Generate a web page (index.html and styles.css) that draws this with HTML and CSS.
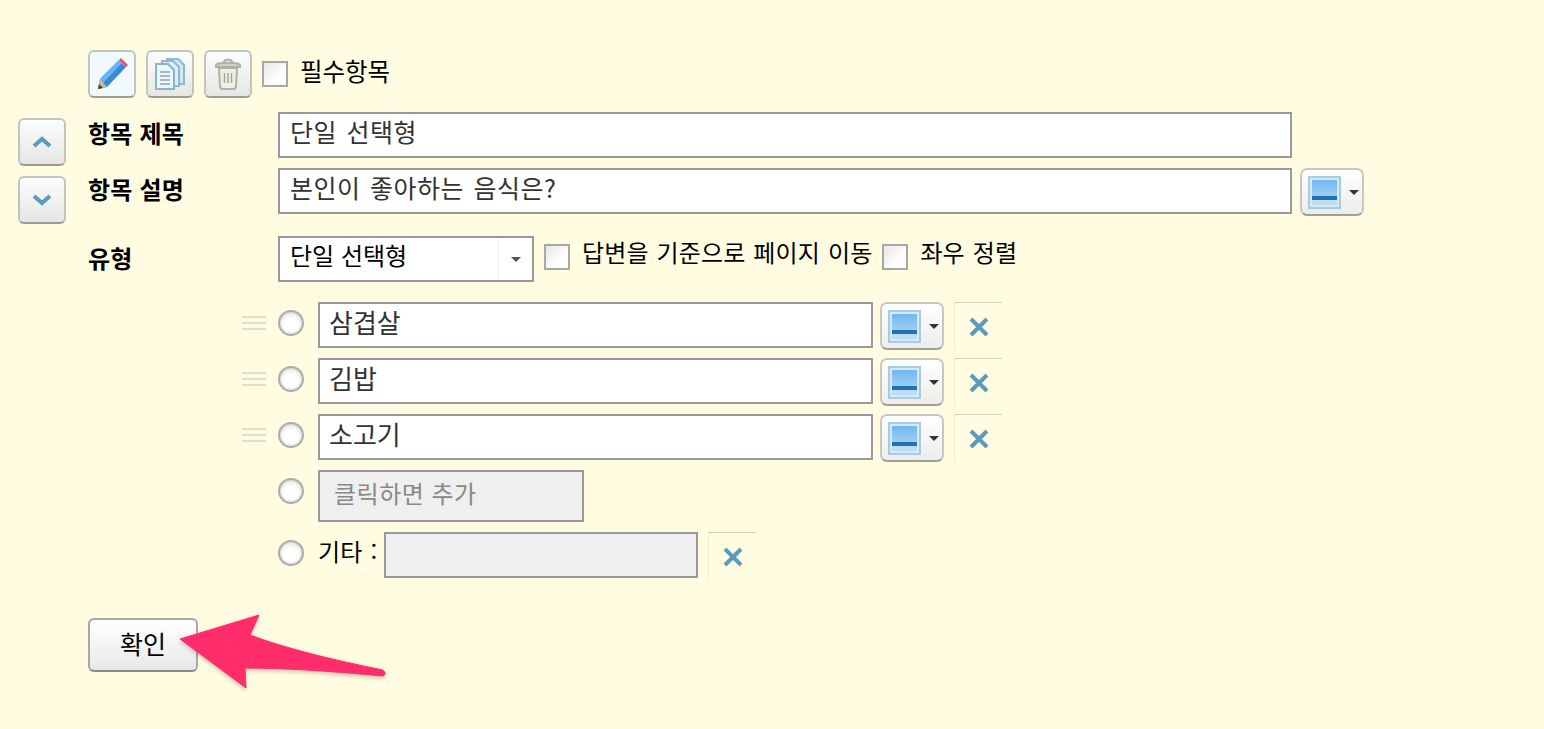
FILE: index.html
```html
<!DOCTYPE html>
<html lang="ko">
<head>
    <meta charset="UTF-8">
    <title>항목 편집</title>
    <link rel="stylesheet" href="styles.css">
</head>
<body>
    <div class="page">
        <div class="move-col">
            <button class="icon-btn"><svg width="22" height="14" viewBox="0 0 22 14"><path d="M3 11 11 4l8 7" class="chevron"/></svg></button>
            <button class="icon-btn"><svg width="22" height="14" viewBox="0 0 22 14"><path d="M3 3l8 7 8-7" class="chevron"/></svg></button>
        </div>
        <div class="editor">
            <div class="toolbar">
                <button class="icon-btn active">
                    <svg width="36" height="36" viewBox="0 0 36 36">
                        <path d="M4 33 6 23 25 4l7 7L13 31z" fill="#3a88dc"/>
                        <path d="M6 23 25 4l3 3L9 27z" fill="#6fb4f2"/>
                        <path d="M25 4l2-2 7 7-2 2z" fill="#e8505a"/>
                        <path d="M4 33 6 23l7 8z" fill="#c9b9a0"/>
                        <path d="M4 33l1-5 4 4z" fill="#444"/>
                    </svg>
                </button>
                <button class="icon-btn">
                    <svg width="36" height="36" viewBox="0 0 36 36">
                        <path d="M15 3h11l6 6v19H15z" fill="#d4e7f4" stroke="#8db8d3" stroke-width="2"/>
                        <path d="M10 5h11l6 6v19H10z" fill="#dfeef8" stroke="#8db8d3" stroke-width="2"/>
                        <path d="M4 8h12l6 6v19H4z" fill="#eef6fb" stroke="#86b4d2" stroke-width="2"/>
                        <path d="M8 16h10M8 20h10M8 24h10M8 28h10" stroke="#90a4b2" stroke-width="1.5"/>
                    </svg>
                </button>
                <button class="icon-btn">
                    <svg width="36" height="36" viewBox="0 0 36 36">
                        <path d="M6 9c0-3 24-3 24 0v2H6z" fill="#d0d0c8" stroke="#b0b0a8" stroke-width="2"/>
                        <path d="M14 6c0-3 8-3 8 0" fill="none" stroke="#b0b0a8" stroke-width="2"/>
                        <path d="M9 12h18l-1 18q0 3-3 3H13q-3 0-3-3z" fill="#efefe6" stroke="#b0b0a8" stroke-width="2"/>
                        <path d="M14.500 17v10M18 17v10M21.500 17v10" stroke="#a8a8a0" stroke-width="1.500"/>
                    </svg>
                </button>
                <span class="check"></span>
                <span class="text required-label">필수항목</span>
            </div>

            <div class="field-row title-row">
                <label class="field-label">항목 제목</label>
                <input class="box wide" value="단일 선택형">
            </div>
            <div class="field-row desc-row">
                <label class="field-label">항목 설명</label>
                <input class="box wide" value="본인이 좋아하는 음식은?">
                <button class="color-btn"><span class="swatch"></span><span class="caret"></span></button>
            </div>
            <div class="field-row type-row">
                <label class="field-label">유형</label>
                <div class="select-box">
                    <span class="select-text">단일 선택형</span>
                    <span class="select-arrow"><span class="caret small"></span></span>
                </div>
                <span class="check"></span>
                <span class="text">답변을 기준으로 페이지 이동</span>
                <span class="check"></span>
                <span class="text">좌우 정렬</span>
            </div>

            <div class="options">
                <div class="option">
                    <span class="handle"></span>
                    <span class="radio"></span>
                    <input class="box opt-input" value="삼겹살">
                    <button class="color-btn"><span class="swatch"></span><span class="caret"></span></button>
                    <button class="del-btn"><svg width="22" height="22" viewBox="0 0 22 22"><path d="M3 3l16 16M19 3 3 19" class="cross"/></svg></button>
                </div>
                <div class="option">
                    <span class="handle"></span>
                    <span class="radio"></span>
                    <input class="box opt-input" value="김밥">
                    <button class="color-btn"><span class="swatch"></span><span class="caret"></span></button>
                    <button class="del-btn"><svg width="22" height="22" viewBox="0 0 22 22"><path d="M3 3l16 16M19 3 3 19" class="cross"/></svg></button>
                </div>
                <div class="option">
                    <span class="handle"></span>
                    <span class="radio"></span>
                    <input class="box opt-input" value="소고기">
                    <button class="color-btn"><span class="swatch"></span><span class="caret"></span></button>
                    <button class="del-btn"><svg width="22" height="22" viewBox="0 0 22 22"><path d="M3 3l16 16M19 3 3 19" class="cross"/></svg></button>
                </div>
                <div class="option add-option">
                    <span class="handle blank"></span>
                    <span class="radio"></span>
                    <input class="box add-input" value="클릭하면 추가">
                </div>
                <div class="option other-option">
                    <span class="handle blank"></span>
                    <span class="radio"></span>
                    <span class="text other-label">기타 :</span>
                    <input class="box other-input">
                    <button class="del-btn"><svg width="22" height="22" viewBox="0 0 22 22"><path d="M3 3l16 16M19 3 3 19" class="cross"/></svg></button>
                </div>
            </div>

            <button class="confirm">확인</button>
        </div>
    </div>

    <svg class="arrow" width="220" height="90" viewBox="0 0 220 90">
        <path d="M2 31 81 7 72 27Q120 45 205 62Q209 66 205 68Q120 60 67 60L68 80Z" fill="#ff2d6c" stroke="#ff2d6c" stroke-width="1" stroke-linejoin="round"/>
    </svg>
</body>
</html>
```

FILE: styles.css
```css
* {
    box-sizing: border-box;
}

body {
    margin: 0;
    height: 729px;
    overflow: hidden;
    background-color: #fffce1;
    font-family: "Noto Sans CJK KR", "Liberation Sans", sans-serif;
    font-size: 24px;
    color: #000;
}

.page {
    display: flex;
    padding: 50px 0 0 18px;
}

.move-col {
    display: flex;
    flex-direction: column;
    gap: 10px;
    width: 48px;
    margin-right: 22px;
    padding-top: 68px;
}

.icon-btn {
    width: 48px;
    height: 48px;
    padding: 0;
    display: flex;
    align-items: center;
    justify-content: center;
    border: 2px solid #c4c4bc;
    border-bottom-color: #9c9c96;
    border-radius: 6px;
    background: linear-gradient(#fbfdfd, #e6e6e4);
}

.icon-btn.active {
    background: #f0fafd;
}

.chevron {
    fill: none;
    stroke: #5b9bc0;
    stroke-width: 4;
}

.toolbar {
    display: flex;
    align-items: center;
    gap: 10px;
    height: 48px;
}

.check {
    flex: none;
    width: 26px;
    height: 26px;
    border: 2px solid #a8a8a4;
    background: linear-gradient(135deg, #e8e8e6, #fff 70%);
}

.text {
    line-height: 34px;
    white-space: nowrap;
}

.required-label {
    margin: -6px 0 0 2px;
    font-size: 24.5px;
}

.field-row {
    display: flex;
    align-items: flex-start;
}

.title-row {
    margin-top: 14px;
}

.desc-row {
    margin-top: 10px;
}

.type-row {
    margin-top: 20px;
    height: 46px;
    align-items: center;
}

.field-label {
    width: 190px;
    flex: none;
    font-weight: 700;
    line-height: 46px;
    margin-top: -2px;
    letter-spacing: 0.2px;
}

.box {
    height: 46px;
    padding: 0 10px 8px;
    border: 2px solid #999;
    border-radius: 0;
    background: #fff;
    color: #333;
    font: inherit;
    font-size: 25px;
    word-spacing: 2px;
    letter-spacing: 0.5px;
    outline: none;
}

.wide {
    width: 1014px;
}

.color-btn {
    flex: none;
    width: 64px;
    height: 48px;
    padding: 0 0 0 6px;
    display: flex;
    align-items: center;
    gap: 8px;
    border: 2px solid #c8c8c0;
    border-bottom-color: #a0a09a;
    border-radius: 7px;
    background: linear-gradient(#fff, #ececea);
}

.desc-row .color-btn {
    margin-left: 8px;
}

.swatch {
    width: 33px;
    height: 33px;
    border: 2px solid #a6cbe2;
    box-shadow: inset 0 0 0 2px #d8e9f4;
    background: linear-gradient(#6db4ee 0, #9ccff5 62%, #1f72b4 62%, #1f72b4 75%, #bfdcf0 75%);
}

.caret {
    width: 0;
    height: 0;
    border-left: 5px solid transparent;
    border-right: 5px solid transparent;
    border-top: 5px solid #333;
}

.select-box {
    flex: none;
    display: flex;
    width: 256px;
    height: 46px;
    margin-right: 10px;
    border: 2px solid #999;
    background: #fff;
}

.select-text {
    flex: 1;
    padding-left: 10px;
    line-height: 34px;
}

.select-arrow {
    width: 34px;
    display: flex;
    align-items: center;
    justify-content: center;
    border-left: 1px solid #f0f0f0;
}

.caret.small {
    border-top-color: #555;
}

.type-row .text {
    margin: -15px 10px 0 0;
    letter-spacing: 0.15px;
    word-spacing: 1px;
}

.type-row .check {
    margin: -4px 12px 0 0;
}

.options {
    display: flex;
    flex-direction: column;
    margin-top: 20px;
    margin-left: 154px;
}

.option {
    display: flex;
    align-items: flex-start;
    height: 56px;
}

.handle {
    flex: none;
    width: 24px;
    height: 14px;
    margin: 14px 12px 0 0;
    border-top: 2px solid #e4dccb;
    border-bottom: 2px solid #e4dccb;
    background: linear-gradient(#e4dccb, #e4dccb) 0 4px / 100% 2px no-repeat;
}

.handle.blank {
    visibility: hidden;
}

.radio {
    flex: none;
    width: 26px;
    height: 26px;
    margin: 8px 14px 0 0;
    border: 2px solid #adada8;
    border-radius: 50%;
    box-shadow: inset 0 0 3px #bbb;
    background: radial-gradient(circle at 50% 65%, #fff 40%, #e4e4e2);
}

.opt-input {
    width: 555px;
    margin-right: 7px;
    padding-left: 9px;
    font-size: 26px;
    word-spacing: 0;
    letter-spacing: 0;
}

.del-btn {
    flex: none;
    width: 48px;
    height: 48px;
    margin-left: 10px;
    padding: 0;
    display: flex;
    align-items: center;
    justify-content: center;
    border: 0;
    border-top: 1px solid #d6d0b8;
    border-left: 1px solid #f0ecd6;
    background: transparent;
}

.cross {
    fill: none;
    stroke: #5b9bbc;
    stroke-width: 4;
}

.add-option {
    height: 62px;
}

.add-input {
    width: 266px;
    height: 52px;
    background: #efefef;
    color: #888;
    padding-left: 14px;
    font-size: 24px;
    word-spacing: 0;
}

.other-label {
    width: 66px;
    margin-top: 2px;
    letter-spacing: 0.2px;
    word-spacing: 1px;
}

.other-input {
    width: 314px;
    background: #efefef;
}

.confirm {
    display: block;
    width: 110px;
    height: 54px;
    margin-top: 30px;
    border: 2px solid #a8a8a2;
    border-bottom-color: #8c8c88;
    border-radius: 6px;
    background: linear-gradient(#fff, #e8e8e8);
    color: #000;
    font: inherit;
    font-size: 25px;
    padding: 0 0 5px;
}

.arrow {
    position: absolute;
    left: 178px;
    top: 608px;
    filter: drop-shadow(0 2px 2px rgba(80, 60, 40, 0.3));
}
```
